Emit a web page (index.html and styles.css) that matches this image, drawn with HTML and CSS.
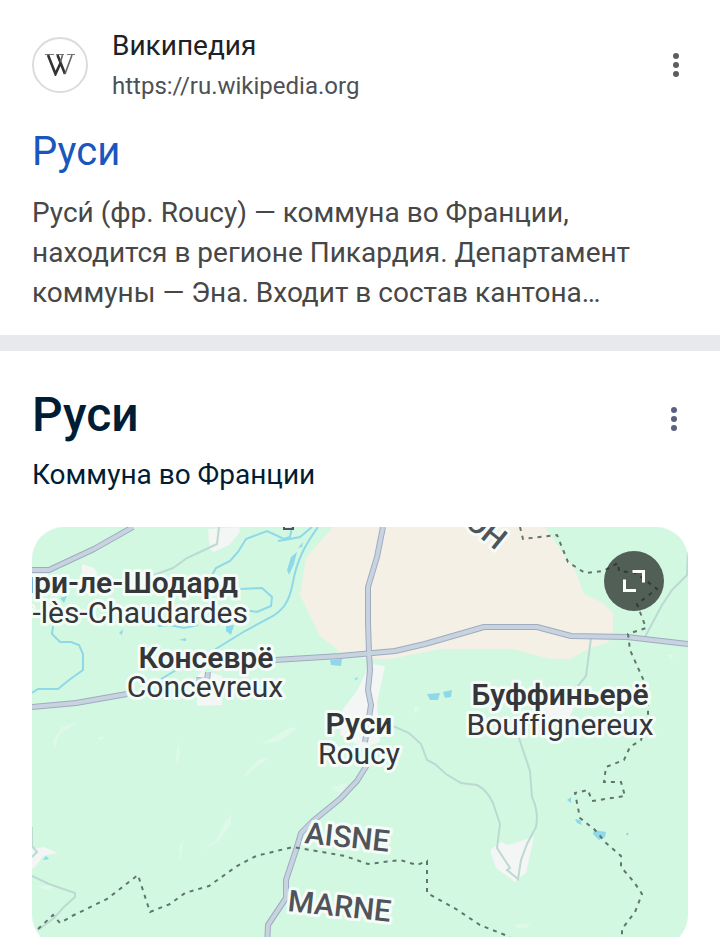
FILE: index.html
```html
<!DOCTYPE html>
<html lang="ru">
<head>
<meta charset="UTF-8">
<title>Руси</title>
<meta name="viewport" content="width=device-width, initial-scale=1.0">
<link rel="stylesheet" href="styles.css">
</head>
<body>

<!-- Search result -->
<article class="result">
  <div class="source">
    <span class="favicon">
      <svg width="30" height="22" viewBox="0 0 30 22" aria-hidden="true">
        <path d="M0 0.500H9M11 0.500H19M22 0.500H30" stroke="#777" stroke-width="1"/>
        <path d="M3 1L10.500 20L15.500 9M12.500 1L20 20" fill="none" stroke="#333" stroke-width="2.600"/>
        <path d="M17.500 1L15.500 8M27 1L20 20" fill="none" stroke="#666" stroke-width="1.600"/>
      </svg>
    </span>
    <div class="source-text">
      <div class="site-name">Википедия</div>
      <cite class="site-url">https://ru.wikipedia.org</cite>
    </div>
    <button class="more" aria-label="Ещё">
      <svg width="6" height="24" viewBox="0 0 6 24"><circle cx="3" cy="3" r="3"/><circle cx="3" cy="12" r="3"/><circle cx="3" cy="21" r="3"/></svg>
    </button>
  </div>
  <h3 class="result-title"><a href="#">Руси</a></h3>
  <p class="snippet">Руси́ (фр. Roucy) — коммуна во Франции, находится в регионе Пикардия. Департамент коммуны — Эна. Входит в состав кантона…</p>
</article>

<!-- Place panel -->
<section class="place">
  <div class="place-head">
    <div>
      <h2 class="place-title">Руси</h2>
      <p class="place-type">Коммуна во Франции</p>
    </div>
    <button class="more more-place" aria-label="Ещё">
      <svg width="6" height="24" viewBox="0 0 6 24"><circle cx="3" cy="3" r="3"/><circle cx="3" cy="12" r="3"/><circle cx="3" cy="21" r="3"/></svg>
    </button>
  </div>

  <div class="map">
    <svg class="map-canvas" viewBox="32 527 656 420">
      <rect class="land" x="32" y="527" width="656" height="420"/>

      <!-- Fields and built-up areas -->
      <path class="field" d="M333 527L306 558L300 595L320 636L340 652L368 659H390L425 652L440 649H513L550 659H570L590 648L606 643L613 638V613L603 603L584 594L575 570L560 549L545 527Z"/>
      <path class="town" d="M208 529L239 527L240 532L229 545L214 552L210 549ZM82 564L94 568L98 574L82 574ZM203 670L222 676L222 705L197 706L197 694L185 688ZM370 664L385 666L377 703L380 742L363 748L340 735L343 709L357 691ZM540 705L574 707L567 722H540ZM32 849L44 847L58 853L43 856L36 866L32 869ZM490 850L501 842L508 845L534 837L526 873L515 882L496 868Z"/>
      <path class="patch" d="M262 744L290 727L297 729L280 741ZM244 775L258 760L271 757L251 770ZM330 788L347 783L341 793ZM53 740L62 727L77 722L59 735L55 748ZM98 737L105 737L99 741ZM178 740L180 752L177 765L176 758ZM244 775L260 760V763L246 776ZM55 729L76 724L70 726ZM180 863L184 838L179 847ZM195 856L216 840L225 822L231 814V824L220 840L205 849ZM515 924L531 924L526 928H516ZM667 655L674 655L671 660ZM414 706L420 708L414 714ZM36 886L55 886L48 890Z"/>

      <!-- Water -->
      <g class="stream">
        <path d="M318 527C305 545 297 560 293 582S282 610 273 616L245 631L214 650M312 527L300 537L290 539L278 541M292 527L290 537L284 539L267 531L246 539L238 552L230 561L216 568L212 575"/>
        <path d="M240 589L262 588L272 597L271 606L257 612L243 610M158 626L170 625L184 628L198 625M178 669L161 679"/>
        <path d="M53 626L52 634L60 642H71L79 645L83 654V670L69 680L58 689L38 689L32 693"/>
      </g>
      <path class="pond" d="M287 570L291 557L297 552L294 564L289 575ZM298 548L303 542L302 547ZM226 626L234 625L231 635L226 631ZM119 633L123 629L122 635ZM179 640L186 638V641ZM60 598L67 596L64 603ZM330 660L342 659L341 666L331 665ZM427 694L440 693L438 700H430ZM443 692L452 690L451 697L445 698ZM354 679L358 677L357 680ZM567 800L571 797V803ZM575 819L580 820L582 825L577 823ZM594 830L606 832L605 837L599 840L593 834ZM626 833L629 833L627 836ZM43 860L46 856L49 859Z"/>

      <!-- Minor roads -->
      <g class="lane">
        <path d="M219 527L217 544L187 558L173 568L154 575"/>
        <path d="M688 550L687 575L672 590L662 605L645 637M591 638L586 676L573 692"/>
        <path d="M393 726L409 733L421 744L427 760L435 764L446 774L461 783L477 785Q487 790 493 803L500 824L497 848L510 868L507 870L518 879L521 860L527 844L536 827Q539 812 532 797L530 771L519 738"/>
        <path d="M32 827V846L37 852L32 857M32 876L49 884L75 893L75 897L64 907L54 918L38 930"/>
      </g>

      <!-- Main roads -->
      <path class="road-case" d="M32 570H49L94 549L133 527M32 707L76 703L127 694M275 660L340 656L395 651L425 644L484 627H537L571 636L627 637L688 644M383 527L377 557L368 587V623L369 653L370 670L368 690L371 705L365 742M367 765L357 781L340 799L313 821L301 833L296 850L286 880L286 898L268 925L267 947M208 672L207 681L196 680"/>
      <path class="road" d="M32 570H49L94 549L133 527M32 707L76 703L127 694M275 660L340 656L395 651L425 644L484 627H537L571 636L627 637L688 644M383 527L377 557L368 587V623L369 653L370 670L368 690L371 705L365 742M367 765L357 781L340 799L313 821L301 833L296 850L286 880L286 898L268 925L267 947M208 672L207 681L196 680"/>

      <!-- Borders -->
      <path class="border" d="M520 527L523 539L557 535L568 562L585 573L603 571L618 563L619 571L636 573L657 589L637 604L646 628L628 634L630 650L648 690V716L641 740L630 747L624 760L606 767L604 782H621L625 796L592 801L588 790L575 793L580 818L595 830L606 843L621 856L621 867L634 882L642 894L635 912L622 929V937"/>
      <path class="border" d="M38 929L53 915L60 923L72 916L107 899L138 875L150 912L170 904L185 893L209 886L237 866L256 856L293 847L345 856L368 864L400 860L417 865L427 861V893L456 909L480 925L510 937"/>

      <!-- Labels -->
      <g class="label">
        <text x="248" y="623" text-anchor="end">Cuiry-lès-Chaudardes</text>
        <text x="205" y="697" text-anchor="middle">Concevreux</text>
        <text x="359" y="764" text-anchor="middle">Roucy</text>
        <text x="560" y="735" text-anchor="middle">Bouffignereux</text>
      </g>
      <g class="label town-label">
        <text x="238" y="593" text-anchor="end">Кюири-ле-Шодард</text>
        <text x="206" y="668" text-anchor="middle">Консеврё</text>
        <text x="359" y="734" text-anchor="middle">Руси</text>
        <text x="560" y="705" text-anchor="middle">Буффиньерё</text>
      </g>
      <g class="label region-label">
        <text transform="translate(304 843) rotate(6)">AISNE</text>
        <text transform="translate(287 911) rotate(6)">MARNE</text>
        <text transform="translate(496 551) rotate(39)" text-anchor="end">КРАОН</text>
      </g>
      <path class="cut-label" d="M284 527V529H293V527"/>
    </svg>
    <button class="expand" aria-label="Развернуть карту">
      <svg width="22" height="22" viewBox="0 0 22 22"><path d="M9.500 1.500H20.500V12.500M1.500 9.500V20.500H13"/></svg>
    </button>
  </div>
</section>

</body>
</html>
```
FILE: styles.css
```css
* {
  box-sizing: border-box;
}
body {
  margin: 0;
  background: #fff;
  font-family: Roboto, Arial, sans-serif;
}
h2, h3, p {
  margin: 0;
}
button {
  border: none;
  padding: 0;
  cursor: pointer;
}
.result {
  padding: 24px 32px 22px;
  border-bottom: 16px solid #e8e9ed;
}
.source {
  display: flex;
  align-items: center;
  gap: 24px;
}
.favicon {
  display: flex;
  align-items: center;
  justify-content: center;
  width: 56px;
  height: 56px;
  border: 2px solid #dadce0;
  border-radius: 50%;
}
.source-text {
  flex: 1;
  padding-top: 2px;
}
.site-name {
  font-size: 28px;
  line-height: 40px;
  color: #202124;
}
.site-url {
  display: block;
  font-size: 24px;
  line-height: 40px;
  font-style: normal;
  color: #4d5156;
}
.more {
  display: flex;
  justify-content: center;
  width: 24px;
  background: none;
  fill: #5b5d60;
}
.more-place {
  margin: 24px 2px 0 0;
  fill: #5a6180;
}
.result-title {
  margin: 20px 0 15px;
  font-size: 40px;
  font-weight: 400;
  line-height: 52px;
}
.result-title a {
  color: #1a56bd;
  text-decoration: none;
}
.snippet {
  font-size: 28px;
  line-height: 40px;
  color: #474747;
}
.place {
  padding: 32px 32px 0;
}
.place-head {
  display: flex;
  align-items: flex-start;
  justify-content: space-between;
}
.place-title {
  font-size: 48px;
  font-weight: 500;
  line-height: 64px;
  color: #001d35;
}
.place-type {
  margin-top: 8px;
  font-size: 28px;
  line-height: 40px;
  color: #001d35;
}
.map {
  position: relative;
  margin-top: 32px;
  border-radius: 32px;
  overflow: hidden;
}
.map-canvas {
  display: block;
  width: 100%;
}
.expand {
  position: absolute;
  top: 24px;
  right: 24px;
  display: flex;
  align-items: center;
  justify-content: center;
  width: 60px;
  height: 60px;
  border-radius: 50%;
  background: rgba(32, 36, 33, 0.72);
}
.expand path {
  fill: none;
  stroke: #fff;
  stroke-width: 3;
}

/* Map layers */
.land {
  fill: #d2f8e2;
}
.field {
  fill: #f4f0e6;
}
.town {
  fill: #f4f5f5;
}
.patch {
  fill: #def9e8;
}
.stream {
  fill: none;
  stroke: #8fd8e8;
  stroke-width: 2;
}
.pond {
  fill: #8fd8e8;
}
.lane {
  fill: none;
  stroke: #bcd9d2;
  stroke-width: 2;
}
.road-case {
  fill: none;
  stroke: #a0abc2;
  stroke-width: 6;
  stroke-linejoin: round;
}
.road {
  fill: none;
  stroke: #c7d3df;
  stroke-width: 4;
  stroke-linejoin: round;
}
.border {
  fill: none;
  stroke: #62756d;
  stroke-width: 2;
  stroke-dasharray: 4 5;
}
.label {
  font-size: 30px;
  font-variant-ligatures: none;
  fill: #34363a;
  stroke: #f5fcf8;
  stroke-width: 6;
  stroke-linejoin: round;
  paint-order: stroke;
}
.town-label {
  font-weight: 600;
}
.region-label {
  font-weight: 500;
  fill: #50545a;
}
.cut-label {
  fill: none;
  stroke: #50545a;
  stroke-width: 2;
}
```
